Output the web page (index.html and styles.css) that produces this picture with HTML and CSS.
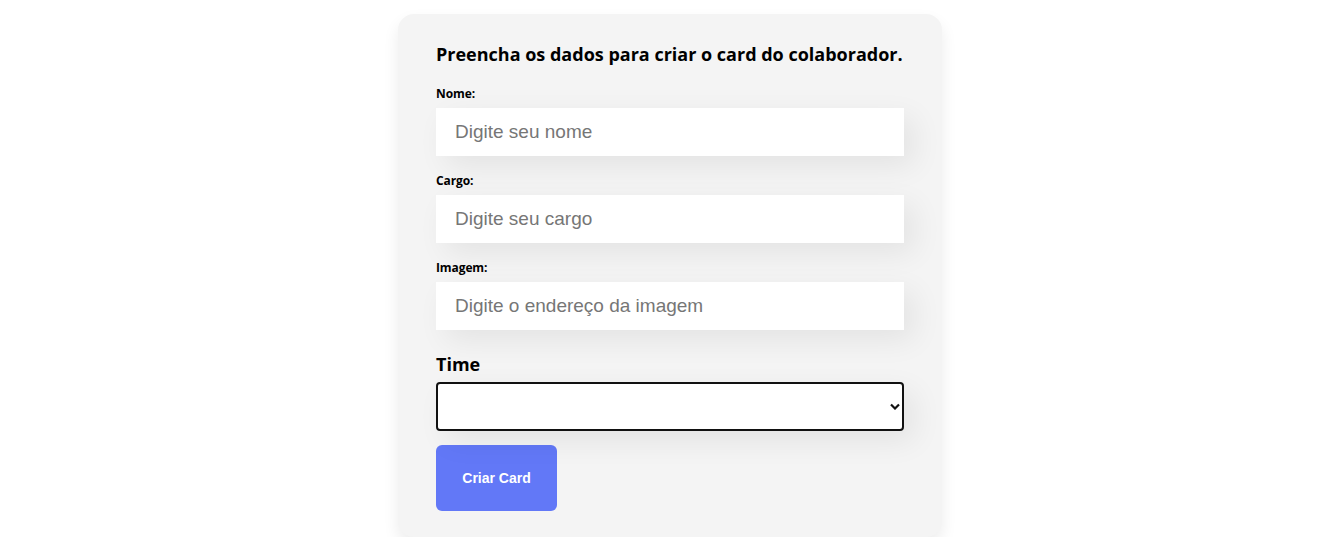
FILE: index.html
```html
<!DOCTYPE html>
<html lang="pt-BR">
<head>
<meta charset="utf-8">
<title>Formulário</title>
<link rel="stylesheet" href="styles.css">
</head>
<body>
<main class="page">
  <form class="card">
    <h2 class="title">Preencha os dados para criar o card do colaborador.</h2>
    <div class="field">
      <label class="label">Nome:</label>
      <input class="input" type="text" placeholder="Digite seu nome">
    </div>
    <div class="field">
      <label class="label">Cargo:</label>
      <input class="input" type="text" placeholder="Digite seu cargo">
    </div>
    <div class="field">
      <label class="label">Imagem:</label>
      <input class="input" type="text" placeholder="Digite o endereço da imagem">
    </div>
    <div class="select-field">
      <label class="select-label">Time</label>
      <div class="select-wrap">
        <select class="select"><option></option></select>
        <svg class="chevron" width="10" height="7" viewBox="0 0 10 7"><path d="M1 1.5 L5 5.5 L9 1.5" fill="none" stroke="#111" stroke-width="2.2"/></svg>
      </div>
    </div>
    <button class="button" type="button">Criar Card</button>
  </form>
</main>
</body>
</html>
```
FILE: styles.css
```css
* { box-sizing: border-box; }
body {
  margin: 0;
  background: #fff;
  font-family: "Open Sans", "Noto Sans", sans-serif;
}
.page {
  display: flex;
  justify-content: center;
  padding-top: 14px;
}
.card {
  width: 544px;
  margin-left: -4px;
  background: #f4f4f4;
  border-radius: 16px;
  box-shadow: 0 8px 16px rgba(0, 0, 0, 0.08);
  padding: 28px 38px 26px;
  display: flex;
  flex-direction: column;
}
.title {
  margin: 0;
  font-size: 18px;
  line-height: 24px;
  font-weight: 700;
  color: #000;
  white-space: nowrap;
}
.field {
  display: flex;
  flex-direction: column;
  margin-top: 20px;
}
.field + .field { margin-top: 17px; }
.label {
  font-size: 12px;
  line-height: 16px;
  font-weight: 700;
  color: #000;
  letter-spacing: -0.1px;
  margin-bottom: 6px;
}
.input {
  height: 48px;
  border: none;
  background: #fff;
  padding: 0 19px;
  font-family: "Liberation Sans", Arial, sans-serif;
  font-size: 19px;
  color: #222;
  box-shadow: 10px 10px 30px rgba(0, 0, 0, 0.07);
  outline: none;
}
.input::placeholder { color: #767676; }
.select-field {
  display: flex;
  flex-direction: column;
  margin-top: 22px;
}
.select-label {
  font-size: 18px;
  line-height: 24px;
  font-weight: 700;
  color: #000;
  margin-bottom: 6px;
}
.select-wrap { position: relative; }
.select {
  width: 100%;
  height: 49px;
  -webkit-appearance: none;
  appearance: none;
  background: #fff;
  border: 2px solid #111;
  border-radius: 4px;
  box-shadow: 10px 10px 30px rgba(0, 0, 0, 0.07);
  font-size: 16px;
}
.chevron {
  position: absolute;
  right: 4px;
  top: 21px;
}
.button {
  align-self: flex-start;
  margin-top: 14px;
  width: 121px;
  height: 66px;
  border: none;
  border-radius: 6px;
  background: #6278f7;
  color: #fff;
  font-family: "Liberation Sans", Arial, sans-serif;
  font-size: 14px;
  font-weight: 700;
}
```
